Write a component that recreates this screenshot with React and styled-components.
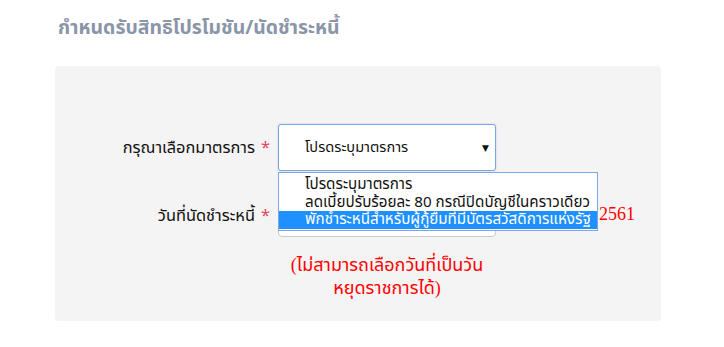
import React from "react";
import styled, { createGlobalStyle } from "styled-components";

const Global = createGlobalStyle`
  html, body { margin: 0; padding: 0; background: #fff; }
  body { font-family: "Noto Sans Thai", Tahoma, "Noto Sans", "DejaVu Sans", sans-serif; }
`;

const Page = styled.div`
  width: 724px;
  height: 347px;
  box-sizing: border-box;
  padding: 15px 0 0 55px;
`;

const Title = styled.h3`
  margin: 0 0 0 3px;
  height: 51px;
  font-size: 19.4px;
  font-weight: bold;
  color: #8a95a8;
  line-height: 26px;
  white-space: nowrap;
`;

const Panel = styled.div`
  width: 606px;
  height: 255px;
  box-sizing: border-box;
  background: #f4f4f4;
  border-radius: 4px;
  padding-top: 58px;
`;

const Form = styled.div`
  display: grid;
  grid-template-columns: 215px 218px;
  column-gap: 8px;
  row-gap: 24px;
  align-items: center;
  position: relative;
`;

const Label = styled.label`
  text-align: right;
  font-size: 16.4px;
  color: #111;
  white-space: nowrap;
`;

const Star = styled.span`
  color: #e8455a;
  margin-left: 6px;
`;

const SelectBox = styled.div`
  height: 47px;
  box-sizing: border-box;
  border: 1px solid #7ea6e0;
  border-radius: 3px;
  background: #fff;
  display: flex;
  align-items: center;
  justify-content: space-between;
  padding: 0 6px 0 26px;
  font-size: 14.6px;
  color: #111;
  box-shadow: 0 0 2px rgba(80, 130, 220, 0.4);
`;

const Arrow = styled.span`
  font-size: 9px;
  color: #111;
`;

const DateCell = styled.div`
  display: flex;
  align-items: center;
  position: relative;
`;

const DateInput = styled.div`
  width: 218px;
  height: 42px;
  flex: none;
  box-sizing: border-box;
  border: 1px solid #ccc;
  border-radius: 4px;
  background: #fff;
`;

const RedText = styled.span`
  color: #f00;
  font-family: "Liberation Serif", "Noto Sans Thai", serif;
  font-size: 18px;
  white-space: nowrap;
  margin: -3px 0 0 103px;
`;

const Note = styled.div`
  grid-column: 2;
  margin-top: -7px;
  text-align: center;
  color: #f00;
  font-family: "Liberation Serif", "Noto Sans Thai", serif;
  font-size: 18px;
  line-height: 23px;
  padding: 0 6px;
`;

const Options = styled.ul`
  position: absolute;
  left: 223px;
  top: 48px;
  width: 320px;
  margin: 0;
  padding: 3px 0 1px;
  list-style: none;
  box-sizing: border-box;
  border: 1px solid #7ea6e0;
  background: #fff;
  z-index: 2;
`;

const Option = styled.li`
  height: 17.5px;
  line-height: 17.5px;
  padding-left: 26px;
  font-size: 15.2px;
  white-space: nowrap;
  background: ${(p) => (p.$active ? "#1e90ff" : "transparent")};
  color: ${(p) => (p.$active ? "#fff" : "#111")};
`;

export default function App() {
  const options = [
    "โปรดระบุมาตรการ",
    "ลดเบี้ยปรับร้อยละ 80 กรณีปิดบัญชีในคราวเดียว",
    "พักชำระหนี้สำหรับผู้กู้ยืมที่มีบัตรสวัสดิการแห่งรัฐ",
  ];
  return (
    <Page>
      <Global />
      <Title>กำหนดรับสิทธิโปรโมชัน/นัดชำระหนี้</Title>
      <Panel>
        <Form>
          <Label>
            กรุณาเลือกมาตรการ<Star>*</Star>
          </Label>
          <SelectBox>
            <span>โปรดระบุมาตรการ</span>
            <Arrow>▼</Arrow>
          </SelectBox>
          <Label>
            วันที่นัดชำระหนี้<Star>*</Star>
          </Label>
          <DateCell>
            <DateInput />
            <RedText>2561</RedText>
          </DateCell>
          <Note>(ไม่สามารถเลือกวันที่เป็นวันหยุดราชการได้)</Note>
          <Options>
            {options.map((o, i) => (
              <Option key={o} $active={i === 2}>
                {o}
              </Option>
            ))}
          </Options>
        </Form>
      </Panel>
    </Page>
  );
}
